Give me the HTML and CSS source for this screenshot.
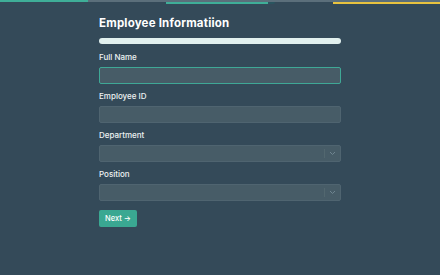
FILE: index.html
```html
<!DOCTYPE html>
<html lang="en">
<head>
    <meta charset="UTF-8">
    <meta name="viewport" content="width=device-width, initial-scale=1.0">
    <title>Employee Information</title>
    <link rel="stylesheet" href="styles.css">
</head>
<body>
    <div class="topbar">
        <div class="track">
            <div class="track-fill"></div>
        </div>
        <div class="steps">
            <div class="step-gap-a"></div>
            <div class="step-teal"></div>
            <div class="step-dark"></div>
            <div class="step-gap-b"></div>
            <div class="step-yellow"></div>
        </div>
    </div>

    <div class="container">
        <h1>Employee Informatiion</h1>
        <div class="progress"></div>

        <form class="form">
            <div class="field">
                <label for="fullName">Full Name</label>
                <input type="text" id="fullName" class="input focused">
            </div>
            <div class="field">
                <label for="employeeId">Employee ID</label>
                <input type="text" id="employeeId" class="input">
            </div>
            <div class="field">
                <label>Department</label>
                <div class="select">
                    <div class="select-value"></div>
                    <div class="select-arrow">
                        <svg width="7" height="5" viewBox="0 0 7 5"><path d="M1 1l2.5 2.5L6 1" fill="none" stroke="#6f8590" stroke-width="1"/></svg>
                    </div>
                </div>
            </div>
            <div class="field">
                <label>Position</label>
                <div class="select">
                    <div class="select-value"></div>
                    <div class="select-arrow">
                        <svg width="7" height="5" viewBox="0 0 7 5"><path d="M1 1l2.5 2.5L6 1" fill="none" stroke="#6f8590" stroke-width="1"/></svg>
                    </div>
                </div>
            </div>
            <button type="button" class="btn">Next &rarr;</button>
        </form>
    </div>
</body>
</html>
```

FILE: styles.css
```css
body {
    margin: 0;
    padding: 0;
    background: #344a59;
    font-family: 'Inter', 'Noto Sans', sans-serif;
    color: #f2f5f6;
    min-height: 275px;
}

.topbar {
    height: 5px;
}

.track {
    height: 2px;
    background: #5b6f7b;
}

.track-fill {
    width: 88px;
    height: 2px;
    background: #3fae98;
}

.steps {
    display: flex;
    height: 2px;
}

.step-gap-a {
    width: 166px;
}

.step-teal {
    width: 102px;
    background: #3fae98;
}

.step-dark {
    width: 7px;
    background: #2a5560;
    border-radius: 0 0 3px 0;
}

.step-gap-b {
    width: 58px;
}

.step-yellow {
    flex: 1;
    background: #e8c33f;
}

.container {
    width: 242px;
    margin: 0 auto;
    padding-top: 10px;
}

h1 {
    margin: 0;
    font-size: 11.5px;
    font-weight: 700;
    line-height: 16px;
    letter-spacing: 0.2px;
    color: #ffffff;
}

.progress {
    margin-top: 7px;
    height: 6px;
    border-radius: 3px;
    background: #e1f0ee;
}

.form {
    display: flex;
    flex-direction: column;
    margin-top: 7px;
}

.field {
    display: flex;
    flex-direction: column;
    margin-bottom: 6px;
}

label {
    font-size: 8px;
    font-weight: 500;
    line-height: 12px;
    margin-bottom: 4px;
    color: #eef2f3;
}

.input {
    box-sizing: border-box;
    height: 17px;
    margin: 0;
    padding: 0 6px;
    border: 1px solid #4f6470;
    border-radius: 2px;
    background: #475c67;
    outline: none;
}

.input.focused {
    border-color: #3fa896;
}

.select {
    box-sizing: border-box;
    display: flex;
    height: 17px;
    border: 1px solid #4f6470;
    border-radius: 2px;
    background: #475c67;
}

.select-value {
    flex: 1;
}

.select-arrow {
    width: 15px;
    display: flex;
    align-items: center;
    justify-content: center;
    border-left: 1px solid #52676f;
    margin: 3px 0;
}

.btn {
    align-self: flex-start;
    margin-top: 3px;
    width: 38px;
    height: 17px;
    padding: 0;
    border: none;
    border-radius: 2px;
    background: #3aa892;
    color: #ffffff;
    font-family: 'Inter', 'Noto Sans', sans-serif;
    font-size: 7.5px;
    font-weight: 500;
    cursor: pointer;
}
```
